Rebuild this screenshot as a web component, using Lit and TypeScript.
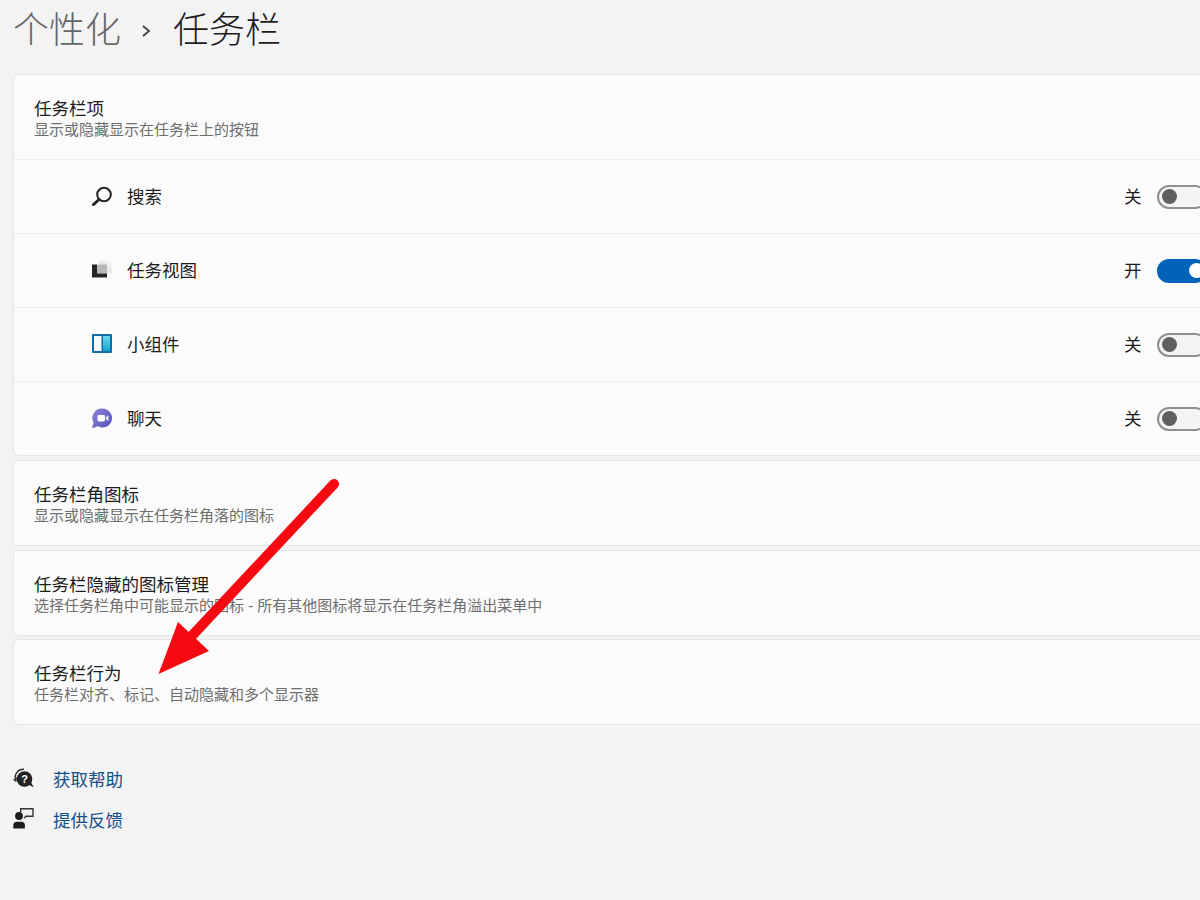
import { LitElement, html, css, svg } from 'lit';
import { customElement } from 'lit/decorators.js';

type ToggleRow = { label: string; on: boolean; icon: ReturnType<typeof svg> };

const searchIcon = svg`
  <circle cx="13" cy="8.500" r="6.800" fill="none" stroke="#222" stroke-width="2"/>
  <path d="M8 13.500 L2.400 18.600" stroke="#222" stroke-width="2.800" stroke-linecap="round"/>`;

const taskViewIcon = svg`
  <defs>
    <linearGradient id="tv" x1="0" y1="1" x2="1" y2="0">
      <stop offset="0" stop-color="#dcdcdc"/>
      <stop offset="1" stop-color="#f8f8f8"/>
    </linearGradient>
  </defs>
  <rect x="8" y="0.500" width="13" height="13" fill="url(#tv)"/>
  <rect x="6" y="4.500" width="10" height="9" fill="#b9b9b9"/>
  <path d="M1 4.500 H6 V13.500 H16 V17.500 H1 Z" fill="#262626"/>`;

const widgetsIcon = svg`
  <defs>
    <linearGradient id="wg" x1="0" y1="0" x2="0" y2="1">
      <stop offset="0" stop-color="#6bd8f0"/>
      <stop offset="1" stop-color="#12a8cc"/>
    </linearGradient>
  </defs>
  <rect x="1" y="0" width="20" height="19" rx="1" fill="#0f6da8"/>
  <rect x="3" y="2" width="7.500" height="15" fill="#f4fbff"/>
  <rect x="12" y="2" width="7" height="15" fill="url(#wg)"/>`;

const chatIcon = svg`
  <defs>
    <linearGradient id="chat" x1="0" y1="0" x2="1" y2="1">
      <stop offset="0" stop-color="#8c84d8"/>
      <stop offset="1" stop-color="#5552b8"/>
    </linearGradient>
  </defs>
  <path d="M11.500 0.500 a9.500 9.500 0 1 1 -4.600 17.800 L2.200 20 a0.700 0.700 0 0 1 -1 -0.800 L2.600 14.600 A9.500 9.500 0 0 1 11.500 0.500 Z" fill="url(#chat)"/>
  <rect x="6.500" y="7" width="7.500" height="6.500" rx="1.400" fill="#fff"/>
  <path d="M14.800 9.600 L17.400 7.600 V13 L14.800 11 Z" fill="#fff"/>`;

const helpIcon = svg`
  <path d="M2.800 13 A8 8 0 0 1 11 2.200" fill="none" stroke="#333" stroke-width="1.500"/>
  <path d="M3.400 10.500 L2.800 14 L0.400 12.200" fill="none" stroke="#333" stroke-width="1.300"/>
  <circle cx="11.500" cy="12" r="7.800" fill="#222"/>
  <path d="M14 17 L20.800 20.200 L17 13.500 Z" fill="#222"/>
  <text x="11.500" y="16" text-anchor="middle" class="q">?</text>`;

const feedbackIcon = svg`
  <circle cx="6" cy="8" r="3.900" fill="#1d1d1d"/>
  <path d="M0.300 20.500 V17.400 A3.600 3.600 0 0 1 3.900 13.800 H8.300 A3.600 3.600 0 0 1 11.900 17.400 V20.500 Z" fill="#1d1d1d"/>
  <path d="M7.700 4 V0.700 H20 V8.300 H13 L11 10.300" fill="none" stroke="#333" stroke-width="1.400"/>`;

const rows: ToggleRow[] = [
  { label: '搜索', on: false, icon: searchIcon },
  { label: '任务视图', on: true, icon: taskViewIcon },
  { label: '小组件', on: false, icon: widgetsIcon },
  { label: '聊天', on: false, icon: chatIcon },
];

const cards = [
  { title: '任务栏角图标', sub: '显示或隐藏显示在任务栏角落的图标' },
  { title: '任务栏隐藏的图标管理', sub: '选择任务栏角中可能显示的图标 - 所有其他图标将显示在任务栏角溢出菜单中' },
  { title: '任务栏行为', sub: '任务栏对齐、标记、自动隐藏和多个显示器' },
];

@customElement('app-root')
export class AppRoot extends LitElement {
  static styles = css`
    :host {
      display: block;
      position: relative;
      width: 1200px;
      height: 900px;
      overflow: hidden;
      background: #f3f3f3;
      color: #1c1c1c;
      font-family: 'Liberation Sans', 'Noto Sans CJK SC', sans-serif;
      font-size: 17.5px;
    }

    .page {
      display: flex;
      flex-direction: column;
      padding-left: 13px;
    }

    .crumbs {
      display: flex;
      align-items: center;
      height: 74px;
      padding-bottom: 13px;
      box-sizing: border-box;
      font-size: 36px;
      font-weight: 300;
      line-height: 60px;
    }

    .crumbs .parent {
      color: #666;
    }

    .crumbs svg {
      margin: 0 21px 0 19px;
    }

    .card {
      width: 1240px;
      box-sizing: border-box;
      background: #fbfbfb;
      border: 1px solid #e6e6e6;
      border-radius: 5px;
    }

    .groups {
      display: flex;
      flex-direction: column;
      gap: 4px;
    }

    .groups .card:last-child {
      margin-top: -1px;
    }

    .heading {
      display: flex;
      flex-direction: column;
      justify-content: center;
      height: 84px;
      padding-left: 20px;
      padding-top: 4px;
      box-sizing: border-box;
    }

    .heading .title {
      line-height: 22px;
    }

    .heading .sub {
      font-size: 15px;
      line-height: 20px;
      color: #6e6e6e;
    }

    .row {
      display: flex;
      align-items: center;
      height: 74px;
      box-sizing: border-box;
      border-top: 1px solid #ececec;
      padding-left: 77px;
    }

    .row svg {
      flex: none;
      width: 22px;
      height: 21px;
    }

    .row .label {
      margin-left: 14px;
      flex: 1;
      padding-bottom: 2px;
    }

    .row .state {
      width: 33px;
      padding-bottom: 2px;
    }

    .toggle {
      width: 50px;
      height: 24px;
      margin-right: 45px;
      box-sizing: border-box;
      border: 2px solid #8f8f8f;
      border-radius: 12px;
      background: #f4f4f4;
      padding: 2.500px 0 0 2.500px;
    }

    .toggle .knob {
      width: 15px;
      height: 15px;
      border-radius: 50%;
      background: #5f5f5f;
    }

    .toggle.on {
      background: #0062b8;
      border-color: #0062b8;
    }

    .toggle.on .knob {
      margin-left: 27px;
      background: #fff;
    }

    .links {
      display: flex;
      flex-direction: column;
      gap: 17px;
      margin-top: 41px;
    }

    .link {
      display: flex;
      align-items: center;
      height: 24px;
      color: #134f88;
    }

    .link svg {
      flex: none;
      width: 22px;
      height: 22px;
      margin-right: 18px;
    }

    .link svg .q {
      font-family: 'Liberation Sans', sans-serif;
      font-size: 11px;
      font-weight: 700;
      fill: #fff;
    }

    .arrow {
      position: absolute;
      left: 0;
      top: 0;
      pointer-events: none;
    }
  `;

  render() {
    return html`
      <div class="page">
        <div class="crumbs">
          <span class="parent">个性化</span>
          <svg width="12" height="14" viewBox="0 0 12 14">
            <path d="M3 2 L9 7 L3 12" fill="none" stroke="#444" stroke-width="1.900"/>
          </svg>
          <span>任务栏</span>
        </div>
        <div class="groups">
          <div class="card">
            <div class="heading">
              <div class="title">任务栏项</div>
              <div class="sub">显示或隐藏显示在任务栏上的按钮</div>
            </div>
            ${rows.map((r) => html`
              <div class="row">
                <svg viewBox="0 0 22 21">${r.icon}</svg>
                <div class="label">${r.label}</div>
                <div class="state">${r.on ? '开' : '关'}</div>
                <div class="toggle ${r.on ? 'on' : ''}"><div class="knob"></div></div>
              </div>
            `)}
          </div>
          ${cards.map((c) => html`
            <div class="card">
              <div class="heading">
                <div class="title">${c.title}</div>
                <div class="sub">${c.sub}</div>
              </div>
            </div>
          `)}
        </div>
        <div class="links">
          <div class="link"><svg viewBox="0 0 22 22">${helpIcon}</svg>获取帮助</div>
          <div class="link"><svg viewBox="0 0 22 22">${feedbackIcon}</svg>提供反馈</div>
        </div>
      </div>
      <svg class="arrow" width="1200" height="900" viewBox="0 0 1200 900">
        <path d="M334 484 L188 640" stroke="#f40a10" stroke-width="10" stroke-linecap="round" fill="none"/>
        <path d="M158.500 674 L178 622 L209 651 Z" fill="#f40a10"/>
      </svg>
    `;
  }
}
